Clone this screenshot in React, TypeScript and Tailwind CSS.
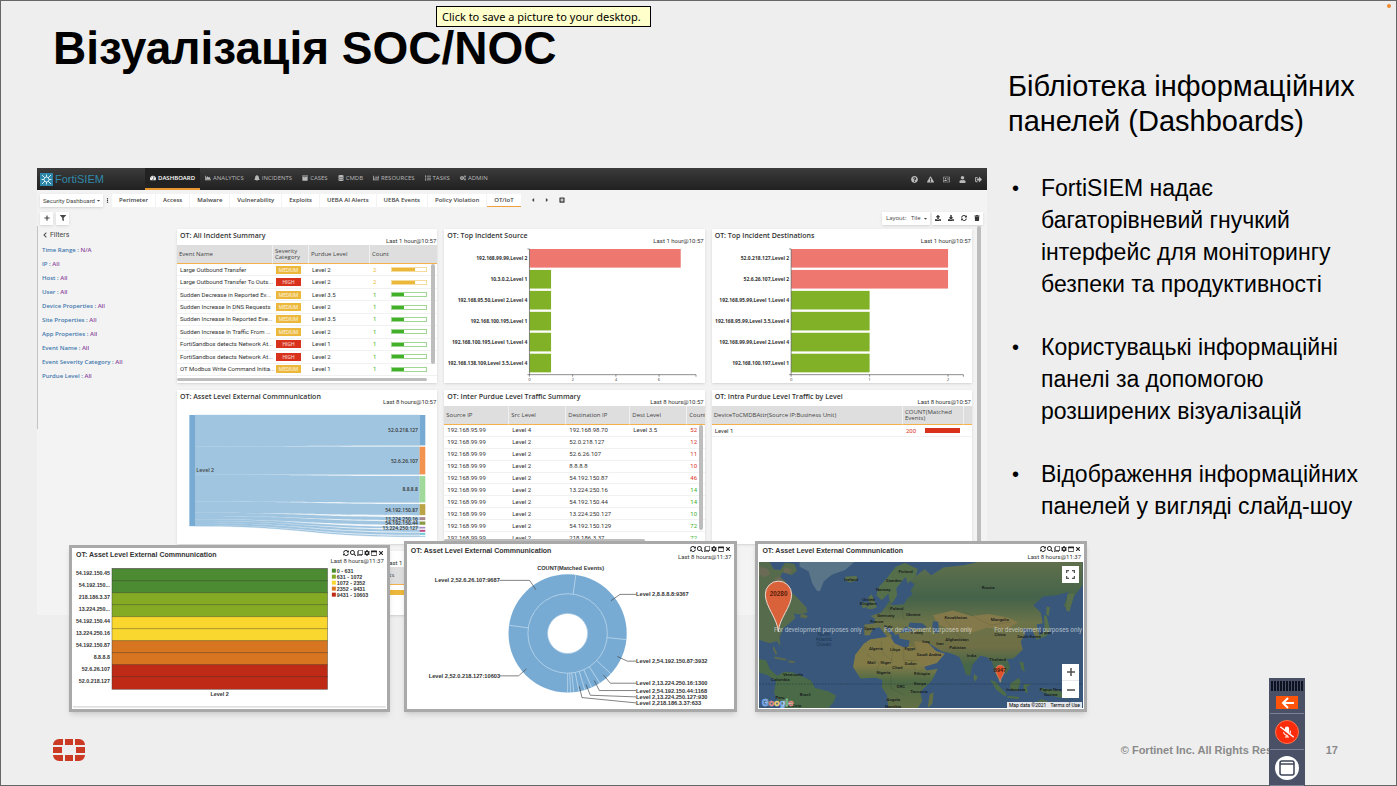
import type { ReactNode } from "react";
import {
  FaArchive,
  FaBell,
  FaCaretDown,
  FaCaretLeft,
  FaCaretRight,
  FaChartArea,
  FaChartBar,
  FaChevronLeft,
  FaCog,
  FaCogs,
  FaDatabase,
  FaDownload,
  FaEllipsisV,
  FaExclamationTriangle,
  FaFilter,
  FaList,
  FaMicrophoneSlash,
  FaPlus,
  FaPlusSquare,
  FaQuestionCircle,
  FaRegAddressCard,
  FaRegClone,
  FaRegWindowMaximize,
  FaSearch,
  FaSignOutAlt,
  FaSyncAlt,
  FaTachometerAlt,
  FaTimes,
  FaTrash,
  FaUpload,
  FaUser,
} from "react-icons/fa";

const NAV_ITEMS = [
  { label: "DASHBOARD", icon: FaTachometerAlt, active: true },
  { label: "ANALYTICS", icon: FaChartArea },
  { label: "INCIDENTS", icon: FaBell },
  { label: "CASES", icon: FaArchive },
  { label: "CMDB", icon: FaDatabase },
  { label: "RESOURCES", icon: FaChartBar },
  { label: "TASKS", icon: FaList },
  { label: "ADMIN", icon: FaCogs },
];

const TABS = [
  "Perimeter",
  "Access",
  "Malware",
  "Vulnerability",
  "Exploits",
  "UEBA AI Alerts",
  "UEBA Events",
  "Policy Violation",
  "OT/IoT",
];

const FILTERS = [
  ["Time Range", "N/A"],
  ["IP", "All"],
  ["Host", "All"],
  ["User", "All"],
  ["Device Properties", "All"],
  ["Site Properties", "All"],
  ["App Properties", "All"],
  ["Event Name", "All"],
  ["Event Severity Category", "All"],
  ["Purdue Level", "All"],
];

const INCIDENTS = [
  { name: "Large Outbound Transfer", severity: "MEDIUM", level: "Level 2", count: 2 },
  { name: "Large Outbound Transfer To Outs...", severity: "HIGH", level: "Level 2", count: 2 },
  { name: "Sudden Decrease in Reported Ev...", severity: "MEDIUM", level: "Level 3.5", count: 1 },
  { name: "Sudden Increase In DNS Requests", severity: "MEDIUM", level: "Level 2", count: 1 },
  { name: "Sudden Increase In Reported Eve...", severity: "MEDIUM", level: "Level 3.5", count: 1 },
  { name: "Sudden Increase In Traffic From ...", severity: "MEDIUM", level: "Level 2", count: 1 },
  { name: "FortiSandbox detects Network At...", severity: "HIGH", level: "Level 1", count: 1 },
  { name: "FortiSandbox detects Network At...", severity: "HIGH", level: "Level 2", count: 1 },
  { name: "OT Modbus Write Command Initia...", severity: "MEDIUM", level: "Level 1", count: 1 },
];

const TRAFFIC = [
  ["192.168.95.99", "Level 4", "192.168.98.70", "Level 3.5", "52"],
  ["192.168.99.99", "Level 2", "52.0.218.127", "", "12"],
  ["192.168.99.99", "Level 2", "52.6.26.107", "", "11"],
  ["192.168.99.99", "Level 2", "8.8.8.8", "", "10"],
  ["192.168.99.99", "Level 2", "54.192.150.87", "", "46"],
  ["192.168.99.99", "Level 2", "13.224.250.16", "", "14"],
  ["192.168.99.99", "Level 2", "54.192.150.44", "", "14"],
  ["192.168.99.99", "Level 2", "13.224.250.127", "", "10"],
  ["192.168.99.99", "Level 2", "54.192.150.129", "", "72"],
  ["192.168.99.99", "Level 2", "218.186.3.37", "", "72"],
];

const SOURCES = [
  { label: "192.168.99.99,Level 2", value: 7 },
  { label: "10.3.0.2,Level 1", value: 1 },
  { label: "192.168.95.50,Level 2,Level 4", value: 1 },
  { label: "192.168.100.195,Level 1", value: 1 },
  { label: "192.168.100.195,Level 1,Level 4", value: 1 },
  { label: "192.168.138.109,Level 3.5,Level 4", value: 1 },
];

const DESTINATIONS = [
  { label: "52.0.218.127,Level 2", value: 2 },
  { label: "52.6.26.107,Level 2", value: 2 },
  { label: "192.168.95.99,Level 1,Level 4", value: 1 },
  { label: "192.168.95.99,Level 3.5,Level 4", value: 1 },
  { label: "192.168.99.99,Level 2,Level 4", value: 1 },
  { label: "192.168.100.197,Level 1", value: 1 },
];

// y / height of the right-hand nodes, in chart units
const SANKEY = [
  { y: 90, h: 91, color: "#77abd4", label: "52.0.218.127" },
  { y: 185, h: 83, color: "#f29350", label: "52.6.26.107" },
  { y: 273, h: 79, color: "#a1d99b", label: "8.8.8.8" },
  { y: 357, h: 33, color: "#bba446", label: "54.192.150.87" },
  { y: 396, h: 9, color: "#a5898e", label: "13.224.250.16" },
  { y: 409, h: 10, color: "#8d9a45", label: "54.192.150.44" },
  { y: 425, h: 5, color: "#a98ac4", label: "13.224.250.127" },
  { y: 434, h: 6, color: "#bd4f88", label: "" },
  { y: 443, h: 6, color: "#6fcbd6", label: "" },
  { y: 452, h: 3, color: "#a3c8e2", label: "" },
];

const HEAT_ROWS = [
  { label: "54.192.150.45", color: "#4c8b31" },
  { label: "54.192.150...", color: "#4c8b31" },
  { label: "218.186.3.37", color: "#85ab24" },
  { label: "13.224.250...", color: "#85ab24" },
  { label: "54.192.150.44", color: "#fad72f" },
  { label: "13.224.250.16", color: "#fad72f" },
  { label: "54.192.150.87", color: "#d87521" },
  { label: "8.8.8.8", color: "#d87521" },
  { label: "52.6.26.107", color: "#be2a16" },
  { label: "52.0.218.127", color: "#be2a16" },
];

const HEAT_LEGEND = [
  { label: "0 - 631", color: "#4c8b31" },
  { label: "631 - 1072", color: "#85ab24" },
  { label: "1072 - 2352", color: "#fad72f" },
  { label: "2352 - 9431", color: "#d87521" },
  { label: "9431 - 10603", color: "#be2a16" },
];

const DONUT_LABELS = [
  { text: "Level 2,52.6.26.107:9687", x: 119, y: 142, line: "313,136 403,136 422,164" },
  { text: "Level 2,52.0.218.127:10603", x: 101, y: 428, line: "313,422 370,422 394,401" },
  { text: "Level 2,8.8.8.8:9367", x: 722, y: 184, line: "722,178 674,178 647,197" },
  { text: "Level 2,54.192.150.87:3932", x: 722, y: 384, line: "722,378 696,378 666,364" },
  { text: "Level 2,13.224.250.16:1300", x: 722, y: 450, line: "722,444 645,444 624,419" },
  { text: "Level 2,54.192.150.44:1168", x: 722, y: 472, line: "722,466 612,466 597,436" },
  { text: "Level 2,13.224.250.127:930", x: 722, y: 491, line: "722,485 585,480 572,448" },
  { text: "Level 2,218.186.3.37:633", x: 722, y: 509, line: "722,503 560,487 552,453" },
];

const DONUT_SPLITS = [8, 96, 133, 147, 156, 163, 169, 174, 177, 180, 278];

const MAP_LABELS: [string, number, number][] = [
  ["Iceland", 320, 136],
  ["Finland", 484, 113],
  ["Sweden", 448, 140],
  ["Norway", 417, 168],
  ["United", 372, 196],
  ["Kingdom", 372, 209],
  ["Poland", 457, 223],
  ["Germany", 425, 244],
  ["Ukraine", 507, 242],
  ["France", 397, 263],
  ["Italy", 432, 277],
  ["Spain", 376, 284],
  ["Turkey", 517, 298],
  ["Russia", 732, 160],
  ["Kazakhstan", 635, 250],
  ["Mongolia", 767, 258],
  ["China", 768, 304],
  ["South Korea", 855, 310],
  ["Japan", 905, 296],
  ["Afghanistan", 638, 319],
  ["Pakistan", 640, 343],
  ["Iraq", 545, 325],
  ["Iran", 587, 331],
  ["India", 682, 366],
  ["Saudi Arabia", 554, 363],
  ["Thailand", 760, 377],
  ["Algeria", 394, 345],
  ["Libya", 452, 349],
  ["Egypt", 497, 345],
  ["Mali", 381, 386],
  ["Niger", 424, 387],
  ["Chad", 459, 401],
  ["Sudan", 499, 389],
  ["Nigeria", 417, 418],
  ["Ethiopia", 533, 421],
  ["Kenya", 527, 450],
  ["DRC", 470, 459],
  ["Tanzania", 524, 475],
  ["Angola", 447, 498],
  ["Namibia", 446, 518],
  ["Indonesia", 815, 467],
  ["Papua New", 920, 469],
  ["Guinea", 920, 482],
  ["Venezuela", 145, 422],
  ["Colombia", 107, 438],
  ["Brazil", 182, 484],
  ["Peru", 106, 493],
  ["Bolivia", 150, 515],
];

const BULLETS = [
  "FortiSIEM надає багаторівневий гнучкий інтерфейс для моніторингу безпеки та продуктивності",
  "Користувацькі інформаційні панелі за допомогою розширених візуалізацій",
  "Відображення інформаційних панелей у вигляді слайд-шоу",
];

function Panel({ title, time, children }: { title: string; time: string; children?: ReactNode }) {
  return (
    <section className="min-w-0 overflow-hidden bg-white shadow-sm">
      <header className="flex h-4 justify-between pr-px pl-[3px]">
        <h3 className="text-[7px] leading-[13px] font-semibold whitespace-nowrap text-[#333]">{title}</h3>
        <span className="self-end font-['Roboto',sans-serif] text-[6px] leading-[8px] whitespace-nowrap text-[#333]">
          {time}
        </span>
      </header>
      {children}
    </section>
  );
}

function Th({ children, last }: { children: ReactNode; last?: boolean }) {
  return (
    <th
      className={`border-b border-[#f5b04c] bg-[#dedede] pl-0.5 text-left leading-[6px] font-medium ${
        last ? "" : "border-r border-r-[#f0f0f0]"
      }`}
    >
      {children}
    </th>
  );
}

function IncidentTable() {
  return (
    <div className="relative">
      <table className="h-[131px] w-full table-fixed border-separate border-spacing-0 text-[6px] leading-[8px]">
        <colgroup>
          <col className="w-[96px]" />
          <col className="w-[36px]" />
          <col className="w-[61px]" />
          <col />
        </colgroup>
        <thead>
          <tr className="h-[19px]">
            <Th>Event Name</Th>
            <Th>Severity Category</Th>
            <Th>Purdue Level</Th>
            <Th last>Count</Th>
          </tr>
        </thead>
        <tbody className="font-['Roboto',sans-serif] text-[#333]">
          {INCIDENTS.map((row, i) => (
            <tr key={i}>
              <td className="border-b border-[#f1f1f1] pl-[3px] whitespace-nowrap">{row.name}</td>
              <td className="border-b border-[#f1f1f1] pl-[3px]">
                <span
                  className={`block h-2 w-[25px] text-center text-[5px] leading-[8px] text-white/80 ${
                    row.severity === "HIGH" ? "bg-[#d8321c]" : "bg-[#ebb83c]"
                  }`}
                >
                  {row.severity}
                </span>
              </td>
              <td className="border-b border-[#f1f1f1] pl-[3px]">{row.level}</td>
              <td className="border-b border-[#f1f1f1] pl-[3px]">
                <div className={`flex items-center gap-[15px] ${row.count > 1 ? "text-[#ebb83c]" : "text-[#43b02a]"}`}>
                  <span>{row.count}</span>
                  <span className="flex h-[5px] w-9 border border-current/50">
                    <span className={`bg-current ${row.count > 1 ? "w-2/3" : "w-1/3"}`} />
                  </span>
                </div>
              </td>
            </tr>
          ))}
        </tbody>
      </table>
      <div className="mt-0.5 mr-[10px] h-[3px] rounded-full bg-[#bdbdbd]" />
      <div className="absolute top-[19px] right-0.5 h-[100px] w-1 rounded-full bg-[#bdbdbd]" />
    </div>
  );
}

function TrafficTable() {
  return (
    <div className="relative">
      <div className="h-[133px] overflow-hidden">
        <table className="h-[138px] w-full table-fixed border-separate border-spacing-0 text-[6px] leading-[8px]">
          <colgroup>
            <col className="w-[65px]" />
            <col className="w-[57px]" />
            <col className="w-[64px]" />
            <col className="w-[57px]" />
            <col />
          </colgroup>
          <thead>
            <tr className="h-[19px]">
              <Th>Source IP</Th>
              <Th>Src Level</Th>
              <Th>Destination IP</Th>
              <Th>Dest Level</Th>
              <Th last>Count</Th>
            </tr>
          </thead>
          <tbody className="font-['Roboto',sans-serif] text-[#333]">
            {TRAFFIC.map((row, i) => (
              <tr key={i}>
                {row.map((cell, j) => (
                  <td
                    key={j}
                    className={`border-b border-[#f1f1f1] pl-[3px] whitespace-nowrap ${
                      j < 4 ? "" : i < 5 ? "text-[#d8321c]" : "text-[#43b02a]"
                    }`}
                  >
                    {cell}
                  </td>
                ))}
              </tr>
            ))}
          </tbody>
        </table>
      </div>
      <div className="mr-[60px] h-[3px] rounded-full bg-[#bdbdbd]" />
      <div className="absolute top-[19px] right-0.5 h-[105px] w-1 rounded-full bg-[#bdbdbd]" />
    </div>
  );
}

function LevelTable() {
  return (
    <table className="w-full table-fixed border-separate border-spacing-0 text-[6px] leading-[8px]">
      <colgroup>
        <col />
        <col className="w-[61px]" />
        <col className="w-[8px]" />
      </colgroup>
      <thead>
        <tr className="h-[19px]">
          <Th>DeviceToCMDBAttr(Source IP:Business Unit)</Th>
          <Th>COUNT(Matched Events)</Th>
          <Th last>{""}</Th>
        </tr>
      </thead>
      <tbody className="font-['Roboto',sans-serif] text-[#333]">
        <tr className="h-[12px]">
          <td className="border-b border-[#f1f1f1] pl-[3px]">Level 1</td>
          <td className="border-b border-[#f1f1f1] pl-[3px]" colSpan={2}>
            <div className="flex items-center gap-[9px] text-[#d8321c]">
              <span>200</span>
              <span className="h-[5px] w-[35px] bg-current" />
            </div>
          </td>
        </tr>
      </tbody>
    </table>
  );
}

interface BarChartProps {
  rows: { label: string; value: number }[];
  axisX: number;
  unit: number;
  ticks: number[];
  end: number;
}

function BarChart({ rows, axisX, unit, ticks, end }: BarChartProps) {
  return (
    <svg viewBox="0 255 783 414" className="block w-full">
      {rows.map((row, i) => (
        <g key={row.label}>
          <rect
            x={axisX}
            y={267 + i * 63}
            width={row.value * unit}
            height={56}
            fill={i === 0 || row.value > 1 ? "#ee776f" : "#80b126"}
          />
          <text x={axisX - 6} y={301 + i * 63} textAnchor="end" fontSize="15" fontWeight="700" fill="#333">
            {row.label}
          </text>
        </g>
      ))}
      <path d={`M${axisX - 6} 267h6v378M${axisX - 6} 645H${end}v6`} fill="none" stroke="#555" strokeWidth="2" />
      {ticks.map((tick, i) => (
        <g key={tick}>
          <path d={`M${axisX + i * unit * ticks[1]} 645v6`} stroke="#555" strokeWidth="2" />
          <text x={axisX + i * unit * ticks[1]} y={665} textAnchor="middle" fontSize="13" fill="#444">
            {tick}
          </text>
        </g>
      ))}
    </svg>
  );
}

function Sankey() {
  let left = 90;
  const scale = 333 / SANKEY.reduce((sum, node) => sum + node.h, 0);
  return (
    <svg viewBox="441 63 780 414" className="block w-full">
      {SANKEY.map((node) => {
        const top = left;
        const bottom = left + node.h * scale;
        left = bottom;
        return (
          <path
            key={node.y}
            d={`M495 ${top}C830 ${top} 830 ${node.y} 1168 ${node.y}V${node.y + node.h}C830 ${node.y + node.h} 830 ${bottom} 495 ${bottom}Z`}
            fill="#a0c5e0"
            stroke="#a0c5e0"
          />
        );
      })}
      <rect x="478" y="90" width="17" height="333" fill="#77abd4" />
      <text x="499" y="262" fontSize="16" fontWeight="600" fill="#444">
        Level 2
      </text>
      {SANKEY.map((node) => (
        <g key={node.y}>
          <rect x="1168" y={node.y} width="17" height={node.h} fill={node.color} />
          <text x="1163" y={node.y + node.h / 2 + 6} textAnchor="end" fontSize="15" fontWeight="600" fill="#333">
            {node.label}
          </text>
        </g>
      ))}
    </svg>
  );
}

function Widget({ className, children }: { className: string; children: ReactNode }) {
  return (
    <article className={`border-3 border-[#a9a9a9] bg-white shadow-md ${className}`}>
      <header className="flex h-[18px] justify-between pr-[3px] pl-1">
        <h3 className="text-[7px] leading-[13px] font-semibold whitespace-nowrap text-[#333]">
          OT: Asset Level External Commnunication
        </h3>
        <div className="flex flex-col items-end font-['Roboto',sans-serif] text-[6px] leading-[8px] text-[#333]">
          <div className="flex h-[9px] items-center gap-px text-[#222]">
            {[FaSyncAlt, FaSearch, FaRegClone, FaCog, FaRegWindowMaximize, FaTimes].map((Icon, i) => (
              <button key={i} type="button" className="text-[6px]">
                <Icon />
              </button>
            ))}
          </div>
          Last 8 hours@11:37
        </div>
      </header>
      {children}
    </article>
  );
}

function HeatMap() {
  return (
    <svg viewBox="36 93 945 429" className="block w-full">
      {HEAT_ROWS.map((row, i) => (
        <g key={row.label + i}>
          <rect x="156" y={101 + i * 36} width="647" height="38" fill={row.color} />
          <path d={`M156 ${101 + i * 36}h647`} stroke="#333" strokeOpacity="0.6" strokeWidth="2" />
          <text x="150" y={121 + i * 36} textAnchor="end" fontSize="16" fontWeight="600" fill="#333">
            {row.label}
          </text>
        </g>
      ))}
      <rect x="156" y="101" width="647" height="363" fill="none" stroke="#333" strokeOpacity="0.6" strokeWidth="2" />
      <text x="479" y="482" textAnchor="middle" fontSize="16" fontWeight="600" fill="#333">
        Level 2
      </text>
      {HEAT_LEGEND.map((item, i) => (
        <g key={item.label}>
          <rect x="816" y={101 + i * 18} width="12" height="12" fill={item.color} />
          <text x="831" y={113 + i * 18} fontSize="16" fontWeight="600" fill="#333">
            {item.label}
          </text>
        </g>
      ))}
      <path d="M39 516h939" stroke="#d5d5d5" strokeWidth="4" />
    </svg>
  );
}

function Donut() {
  return (
    <svg viewBox="36 81 981 441" className="block w-full">
      <text x="526" y="105" textAnchor="middle" fontSize="17" fontWeight="700" fill="#333">
        COUNT(Matched Events)
      </text>
      <circle cx="517" cy="295" r="177" fill="#77abd4" />
      <circle cx="517" cy="295" r="119" fill="none" stroke="#c9dfef" strokeWidth="2" />
      <circle cx="517" cy="295" r="60" fill="#fff" stroke="#a7c9e4" strokeWidth="2" />
      {DONUT_SPLITS.map((angle) => (
        <path key={angle} d="M517 176V118" stroke="#c9dfef" strokeWidth="2" transform={`rotate(${angle} 517 295)`} />
      ))}
      {DONUT_LABELS.map((item) => (
        <g key={item.text}>
          <polyline points={item.line} fill="none" stroke="#444" strokeWidth="2" />
          <text x={item.x} y={item.y} fontSize="17" fontWeight="600" fill="#333">
            {item.text}
          </text>
        </g>
      ))}
    </svg>
  );
}

function WorldMap() {
  return (
    <div className="relative px-px pb-px">
      <svg viewBox="43 80 973 440" className="block w-full bg-[#38577b]">
        <defs>
          <linearGradient id="africa" x1="0" y1="0" x2="0" y2="1">
            <stop offset="0.4" stopColor="#827b48" />
            <stop offset="0.62" stopColor="#4e6a45" />
            <stop offset="1" stopColor="#626f45" />
          </linearGradient>
          <linearGradient id="asia" x1="0" y1="0" x2="0" y2="1">
            <stop offset="0" stopColor="#60704c" />
            <stop offset="0.3" stopColor="#44634a" />
            <stop offset="0.5" stopColor="#6b7349" />
            <stop offset="0.7" stopColor="#706f45" />
            <stop offset="0.85" stopColor="#486748" />
          </linearGradient>
        </defs>
        {/* Americas and Greenland */}
        <path d="M165 80h165l-28 24-40 14-24 20-12 30-10-2-14-24-10-34-27-14z" fill="#5a7588" />
        <path d="M43 80h32l12 22 20 2 14-22 28 4 8 20-16 14-26-10-10 16 18 12 4 24 24 18 34 36 4 16-28 6-14-4 6 14-22 20-16 12-10 26 2 28-10-16-24 6-30-10z" fill="#566b4b" />
        <path d="M43 94l26 6 8 16-16 10-18-8zM88 130l18-8 10 14-18 6zM120 96l22 6-6 14-20-4z" fill="#6a6a55" />
        <path d="M170 234l20 8-6 8-18-4zM85 330l12 22-2 10-10-20zM88 364l40 8-8 4-30-6zM130 376l20 2v6l-18-2z" fill="#5c6b4a" />
        <path d="M43 372l22 4 10 26 22 20 22-12 26 2 24 10 30 14 12 22 44 12 20 12-8 20-16 18H118l-14-16-16-30 6-36-26-18-25-8z" fill="#4b6b48" />
        {/* Europe and Asia */}
        <path d="M302 124l34-3 3 14-22 7-15-6zM352 203l16-2 2 14-16 4zM370 188l12-12 6 16 10 24-16 6-16-2 10-14z" fill="#5a6f4c" />
        <path d="M396 180l6-24 24-26 28-36 28-11 38 18-6 22-24 22-6-20-12 14-16 20 2 22-14 22-8-4-4-24-20 20z" fill="#566f4b" />
        <path d="M360 300v-32l30-3 2-14-14-9 32-10 15-20 12-18 6 16 36-4 10-16 16-12-6-12 12-18-14-12 44-34 20 18 38-24 60-6 42-10h315v70l-26 34-14 42-16-14 14-42-36 10-40 4-30 26 22 22 6 32-18 4 8 34-12 4-10-24-28-2 6 18-12 22 6 24-28 26-20 2 10 24-12 22-16-22-10-6 2 26 14 26-12-6-14-30-6-26-16-14-20-4-24 28-6 32-12-2-10-30-10-24-22-10-32-8-46-28 14 22 26 10 4 10-24 22-40 14-16-32-18-32 4-18-30-6-4-16 48-8-26-12-16 18-14 8-16-20-20-10 26 34-14 4-24-32-20 4-10 20z" fill="url(#asia)" />
        <path d="M566 240l60-14 56 16 52-6 60 12 28 14-34 20-60-4-44 14-60-6-42-18z" fill="#84794a" />
        <path d="M510 318l40 4 26 26 26 8-24 28-40 12-18-32z" fill="#857a47" />
        <path d="M496 262l38 2 14 12-30 6-26-8zM566 258l16 2 2 32-12 2-8-20z" fill="#38577b" />
        <path d="M900 240l8 2 10 40-10 20-30 12-4-6 28-18zM908 214l10 2-4 26-8-4zM970 176l22-2-16 56-10-6z" fill="#57704b" />
        <path d="M690 416l10 10-6 14-6-10z" fill="#57704b" />
        {/* Africa */}
        <path d="M378 312l60-8 12 20 28 12 34-2 14 38 20 34 34-4-18 36-34 32 6 28-14 22h-88l-4-40-16-24 2-22-20-6-46 2-22-34 6-36 26-34z" fill="url(#africa)" />
        <path d="M556 478l12-6-4 34-14 14z" fill="#626f45" />
        {/* South-east Asia and Australia */}
        <path d="M738 434l16 6 34 38-6 6-26-20zM790 482l36 4-2 6-34-4zM798 446l26-18 6 12-10 28-22-4zM838 448l24-2-14 10 4 20-12-8zM826 378l12 4 4 30-10-10zM890 458l60 10 24 24-34-6-22-6-28-12zM862 510l30-18 18 6 10 22H850z" fill="#4f6c48" />
        <path d="M43 447h973" stroke="#1d2c3d" strokeOpacity="0.6" strokeWidth="2" strokeDasharray="6 3" />
        <path d="M410 318l6 36 30 26M478 336v40h40M446 330l-4 50M366 356l40 30-10 20M500 376l14 30M600 250l40 50 30 20M660 230l80 40 60-10M430 212l16 40M470 215l10 40M440 420v40l40 20" fill="none" stroke="#222" strokeOpacity="0.35" />
        <g className="font-['Roboto',sans-serif]" fontSize="13" fontWeight="500" fill="#14181a" textAnchor="middle">
          {MAP_LABELS.map(([name, x, y]) => (
            <text key={name} x={x} y={y}>
              {name}
            </text>
          ))}
        </g>
        <g fontSize="15" fill="#1d3550" textAnchor="middle">
          <text x="238" y="303">North</text>
          <text x="238" y="318">Atlantic</text>
          <text x="238" y="333">Ocean</text>
        </g>
        <g className="font-['Roboto',sans-serif]" fontSize="19" fill="#fff" fillOpacity="0.6">
          <text x="88" y="289">For development purposes only</text>
          <text x="419" y="289">For development purposes only</text>
          <text x="750" y="289">For development purposes only</text>
        </g>
        <path d="M101 290C99 250 62 215 62 177a39 39 0 0 1 79 0c0 38-38 73-40 113z" fill="#d9623a" stroke="#e8d8d0" strokeWidth="3" />
        <text x="102" y="182" textAnchor="middle" fontSize="19" fontWeight="600" fill="#5a1c0c">
          20280
        </text>
        <path d="M768 442c-1-14-14-25-14-38a14 14 0 0 1 28 0c0 13-13 24-14 38z" fill="#e0532c" stroke="#e8d8d0" strokeWidth="1" />
        <text x="768" y="410" textAnchor="middle" fontSize="17" fontWeight="700" fill="#471b12">
          8947
        </text>
        <g className="font-['Roboto',sans-serif]" fontSize="30" fontWeight="700" stroke="#dfe6ee" strokeWidth="1">
          <text x="51" y="512">
            <tspan fill="#4285f4">G</tspan>
            <tspan fill="#ea4335">o</tspan>
            <tspan fill="#fbbc05">o</tspan>
            <tspan fill="#4285f4">g</tspan>
            <tspan fill="#34a853">l</tspan>
            <tspan fill="#ea4335">e</tspan>
          </text>
        </g>
      </svg>
      <button type="button" aria-label="Full screen" className="absolute top-1 right-[5px] flex size-[17px] items-center justify-center bg-white">
        <svg viewBox="0 0 18 18" className="size-[9px]" fill="none" stroke="#555" strokeWidth="3">
          <path d="M1 6V1h5M12 1h5v5M17 12v5h-5M6 17H1v-5" />
        </svg>
      </button>
      <div className="absolute right-[5px] bottom-[11px] flex w-[17px] flex-col divide-y divide-gray-200 bg-white">
        <button type="button" aria-label="Zoom in" className="flex h-[17px] items-center justify-center">
          <svg viewBox="0 0 10 10" className="size-2" stroke="#555" strokeWidth="2">
            <path d="M0 5h10M5 0v10" />
          </svg>
        </button>
        <button type="button" aria-label="Zoom out" className="flex h-[17px] items-center justify-center">
          <svg viewBox="0 0 10 10" className="size-2" stroke="#555" strokeWidth="2">
            <path d="M0 5h10" />
          </svg>
        </button>
      </div>
      <div className="absolute right-0.5 bottom-px flex gap-1 bg-[#e3e6ea] px-0.5 font-['Roboto',sans-serif] text-[5px] leading-[6px]">
        <span>Map data ©2021</span>
        <a href="#terms">Terms of Use</a>
      </div>
    </div>
  );
}

function Dashboard() {
  return (
    <div className="bg-[#f3f3f3] font-['Open_Sans','Noto_Sans',sans-serif] text-[#444]">
      <nav className="flex h-[22px] items-stretch bg-linear-to-b from-[#3b3b3b] to-[#212121] pl-[3px] text-[6px] text-[#b9b9b9]">
        <div className="flex w-[105px] items-center gap-0.5">
          <svg viewBox="0 0 26 26" className="size-[13px]">
            <rect width="26" height="26" fill="#2e87a8" />
            <path d="M4 4l6 6M22 4l-6 6M4 22l6-6M22 22l-6-6M13 3v5M13 18v5M3 13h5M18 13h5" stroke="#d5ecf4" strokeWidth="2" />
            <circle cx="13" cy="13" r="5" fill="none" stroke="#d5ecf4" strokeWidth="2" />
          </svg>
          <span className="font-['Liberation_Sans',sans-serif] text-[11px] text-[#3188a8]">FortiSIEM</span>
        </div>
        {NAV_ITEMS.map(({ label, icon: Icon, active }) => (
          <a
            key={label}
            href={`#${label.toLowerCase()}`}
            className={`flex items-center gap-0.5 border-b-2 px-[5px] ${
              active ? "border-[#e8962e] bg-[#222] font-semibold text-white" : "border-transparent"
            }`}
          >
            <Icon />
            {label}
          </a>
        ))}
        <div className="ml-auto flex items-center gap-[9px] pr-[5px] text-[7px]">
          {[FaQuestionCircle, FaExclamationTriangle, FaRegAddressCard, FaUser, FaSignOutAlt].map((Icon, i) => (
            <button key={i} type="button">
              <Icon />
            </button>
          ))}
        </div>
      </nav>

      <div className="flex h-[20px] items-center gap-px px-[3px] text-[6px] font-semibold">
        <label className="flex h-[13px] w-[63px] items-center bg-white px-[3px] shadow">
          <select
            aria-label="Dashboard"
            className="w-[53px] shrink-0 appearance-none font-['Roboto',sans-serif] font-normal outline-none"
          >
            <option>Security Dashboard</option>
          </select>
          <FaCaretDown className="size-[5px] shrink-0" />
        </label>
        <FaEllipsisV className="mx-px size-[5px]" />
        {TABS.map((tab) => (
          <button
            key={tab}
            type="button"
            className={`h-[13px] border-b bg-white px-[7px] pt-px whitespace-nowrap ${
              tab === "OT/IoT" ? "border-[#f0a03c]" : "border-white"
            }`}
          >
            {tab}
          </button>
        ))}
        <div className="flex gap-2 px-2">
          <FaCaretLeft />
          <FaCaretRight />
        </div>
        <FaPlusSquare />
      </div>

      <div className="flex h-4 items-center justify-between pr-1 pl-[3px] text-[6px]">
        <div className="flex gap-[3px]">
          <button type="button" aria-label="Add" className="flex h-[13px] w-[13px] items-center justify-center bg-white shadow">
            <FaPlus />
          </button>
          <button type="button" aria-label="Filter" className="flex h-[13px] w-[13px] items-center justify-center bg-white shadow">
            <FaFilter />
          </button>
        </div>
        <div className="flex gap-0.5">
          <div className="flex h-[13px] items-center bg-white shadow">
            <label htmlFor="layout" className="w-[29px] pl-1 font-medium">
              Layout:
            </label>
            <select id="layout" className="w-[12px] appearance-none font-medium outline-none">
              <option>Tile</option>
            </select>
            <FaCaretDown className="mr-0.5 size-[5px]" />
          </div>
          <div className="flex h-[13px] w-[51px] items-center justify-around bg-white text-[#333] shadow">
            {[FaUpload, FaDownload, FaSyncAlt, FaTrash].map((Icon, i) => (
              <button key={i} type="button">
                <Icon />
              </button>
            ))}
          </div>
        </div>
      </div>

      <div className="flex">
        <aside className="h-[203px] w-[140px] shrink-0 border-l border-[#c4c4c4] pt-[3px] pl-1 text-[6px] font-semibold">
          <div className="flex h-3 items-center gap-0.5 font-['Roboto',sans-serif] text-[7px] font-normal">
            <FaChevronLeft className="size-[6px]" />
            Filters
          </div>
          <ul className="pt-0.5">
            {FILTERS.map(([name, value]) => (
              <li key={name} className="h-[14px] leading-[14px] text-[#3f78ad]">
                {name} : <span className="text-[#8c4a9c]">{value}</span>
              </li>
            ))}
          </ul>
        </aside>
        <div className="grid flex-1 grid-cols-3 grid-rows-[154px_154px_64px] gap-[7px] pt-[3px] text-[6px]">
          <Panel title="OT: All Incident Summary" time="Last 1 hour@10:57">
            <IncidentTable />
          </Panel>
          <Panel title="OT: Top Incident Source" time="Last 1 hour@10:57">
            <BarChart rows={SOURCES} axisX={257} unit={65} ticks={[0, 2, 4, 6]} end={758} />
          </Panel>
          <Panel title="OT: Top Incident Destinations" time="Last 1 hour@10:57">
            <BarChart rows={DESTINATIONS} axisX={238} unit={236} ticks={[0, 1, 2]} end={756} />
          </Panel>
          <Panel title="OT: Asset Level External Commnunication" time="Last 8 hours@10:57">
            <Sankey />
          </Panel>
          <Panel title="OT: Inter Purdue Level Traffic Summary" time="Last 8 hours@10:57">
            <TrafficTable />
          </Panel>
          <Panel title="OT: Intra Purdue Level Traffic by Level" time="Last 8 hours@10:57">
            <LevelTable />
          </Panel>
          <Panel title="" time="Last 1 hour@10:57">
            <div className="flex h-[18px] items-center justify-end border-b border-[#f5b04c] bg-[#dedede] pr-[43px]">Events</div>
            <div className="mt-[5px] ml-auto h-[5px] w-12 bg-[#ebb83c]" />
          </Panel>
        </div>
        <div className="mr-[6px] ml-[5px] w-1 rounded-full bg-[#bdbdbd]" />
      </div>
    </div>
  );
}

function FloatingToolbar() {
  return (
    <div className="absolute right-[91px] bottom-[-1px] flex w-9 flex-col bg-[#4a5166] px-px pt-[3px]">
      <div className="mx-px h-[10px] bg-[repeating-linear-gradient(90deg,#0c1220_0_2px,#4a5166_2px_3px)]" />
      <button type="button" aria-label="Back" className="flex h-[23px] items-center justify-center border-b border-[#7b8296]">
        <svg viewBox="0 0 22 13" className="h-[13px] w-[22px] bg-[#ff540a]" fill="none" stroke="#fff" strokeWidth="2">
          <path d="M18 7H8M12 2L7 7l5 5" />
        </svg>
      </button>
      <button type="button" aria-label="Unmute" className="flex h-9 items-center justify-center border-b border-[#7b8296]">
        <span className="flex size-6 items-center justify-center rounded-full border border-[#ff7350] bg-[#fb2c0c] text-white">
          <FaMicrophoneSlash className="size-[14px]" />
        </span>
      </button>
      <button type="button" aria-label="Window" className="flex h-9 items-center justify-center border-b border-[#7b8296]">
        <svg viewBox="0 0 24 24" className="size-6">
          <circle cx="12" cy="12" r="12" fill="#fff" />
          <rect x="5" y="5" width="14" height="14" rx="2" fill="none" stroke="#3c4357" strokeWidth="1.5" />
          <path d="M5 8h14" stroke="#3c4357" strokeWidth="1.5" />
        </svg>
      </button>
    </div>
  );
}

export default function App() {
  return (
    <div className="relative flex min-h-screen flex-col border border-[#666] bg-[#eeeeee] font-['Liberation_Sans',Arial,sans-serif] text-black">
      <div className="absolute top-[5px] left-[435px] border border-black bg-[#ffffcb] pr-[9px] pl-[5px] font-['Noto_Sans',sans-serif] text-[11px] leading-[19px]">
        Click to save a picture to your desktop.
      </div>
      <span className="absolute top-[3px] right-[5px] size-1 rounded-full bg-[#ef8b2c]" />

      <main className="flex">
        <div className="min-w-0 flex-1 pl-9">
          <h1 className="h-[167px] pt-[23px] pl-4 text-[46px] leading-[48px] font-bold whitespace-nowrap">
            Візуалізація SOC/NOC
          </h1>
          <Dashboard />
          <div className="relative -mt-[74px] -mr-[100px] ml-8 flex items-end gap-[14px]">
            <Widget className="flex-[321]">
              <HeatMap />
            </Widget>
            <Widget className="mr-1 flex-[334]">
              <Donut />
            </Widget>
            <Widget className="flex-[332]">
              <WorldMap />
            </Widget>
          </div>
        </div>
        <div className="w-[409px] shrink-0 pt-[68px] pl-[21px]">
          <h2 className="text-[29px] leading-[35px]">
            Бібліотека інформаційних
            <br />
            панелей (Dashboards)
          </h2>
          <ul className="flex flex-col gap-[31px] pt-[33px] pr-7 text-[23px] leading-[32px]">
            {BULLETS.map((text) => (
              <li key={text} className="flex">
                <span className="w-[33px] shrink-0 pl-1 text-[20px]">•</span>
                <span>{text}</span>
              </li>
            ))}
          </ul>
        </div>
      </main>

      <footer className="mt-auto flex items-center justify-between pr-[58px] pb-6 pl-[52px] text-[11px] font-bold text-[#8a8a8a]">
        <svg viewBox="0 0 32 22" className="h-[22px] w-8" fill="#cb3a25">
          <path d="M0 6a6 6 0 0 1 6-6h4v6zM12 0h8v6h-8zM22 0h4a6 6 0 0 1 6 6H22zM0 8h9v6H0zM23 8h9v6h-9zM0 16h10v6H6a6 6 0 0 1-6-6zM12 16h8v6h-8zM22 16h10a6 6 0 0 1-6 6h-4z" />
        </svg>
        <div className="flex">
          <span className="w-[205px]">© Fortinet Inc. All Rights Reserved.</span>
          <span>17</span>
        </div>
      </footer>
      <FloatingToolbar />
    </div>
  );
}
